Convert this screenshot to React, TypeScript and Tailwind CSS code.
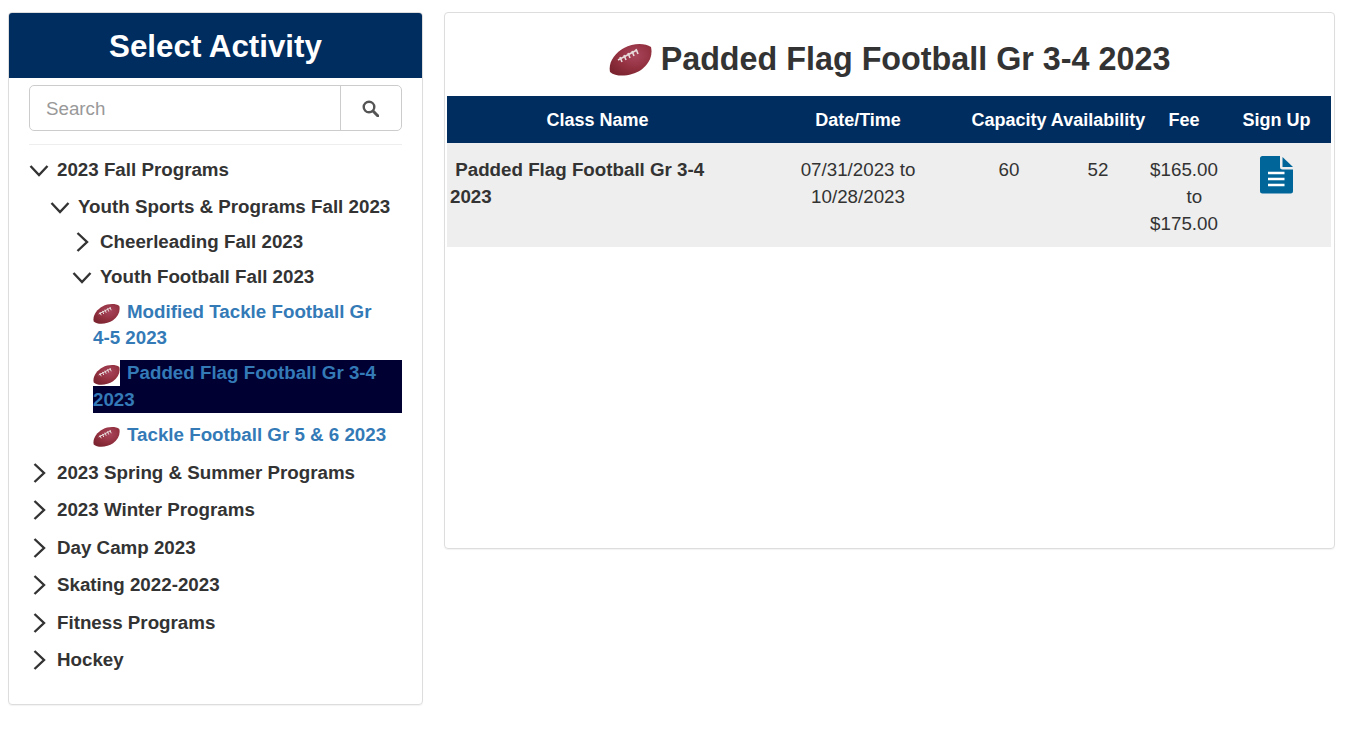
const Football = ({ w = 27, h = 20, id }: { w?: number; h?: number; id: string }) => (
  <svg width={w} height={h} viewBox="0 0 43 32" className="block">
    <defs>
      <radialGradient id={id} cx="60%" cy="35%" r="70%">
        <stop offset="0%" stopColor="#a8455c" />
        <stop offset="60%" stopColor="#93303f" />
        <stop offset="100%" stopColor="#7c2530" />
      </radialGradient>
    </defs>
    <path d="M1 28 C-1 18 6 9 15 4 C24 -1 36 -1 42 3 C44 12 40 20 32 26 C23 32 8 34 1 28 Z" fill={`url(#${id})`} />
    <path d="M9 16 L28 6" stroke="#e8dcdc" strokeWidth="1.6" />
    <path d="M11 13 L13 18 M15 11 L17 16 M19 9 L21 14 M23 7 L25 12 M27 5 L29 10" stroke="#e8dcdc" strokeWidth="1.6" />
  </svg>
);

// chevrons of the tree
const Arrow = ({ open }: { open: boolean }) => (
  <svg width="20" height="20" viewBox="0 0 20 20" fill="none" stroke="#333" strokeWidth="2.4" className="shrink-0 mt-[4px]">
    {open ? <path d="M1.5 6 L10 15 L18.5 6" /> : <path d="M5.5 1 L15 10 L5.5 19" />}
  </svg>
);

const SearchGlyph = () => (
  <svg width="17" height="17" viewBox="0 0 17 17" fill="none" stroke="#555" strokeWidth="2.4" className="relative -left-px">
    <circle cx="7" cy="7" r="5.3" />
    <path d="M11 11 L16 16" strokeWidth="3" strokeLinecap="round" />
  </svg>
);

const FileGlyph = () => (
  <svg width="33" height="38" viewBox="0 0 33 38" className="mx-auto">
    <path d="M2.5 0 H20 V11 Q20 13.5 22.5 13.5 H33 V35 Q33 37.5 30.5 37.5 H2.5 Q0 37.5 0 35 V2.5 Q0 0 2.5 0 Z" fill="#006699" />
    <path d="M22.5 1 L33 11 H22.5 Z" fill="#006699" />
    <path d="M8 17 H24.5 M8 23 H24.5 M8 29 H24.5" stroke="#fff" strokeWidth="2.4" />
  </svg>
);

const Branch = ({ label, open = false, gap = "mb-[10.5px]", children }: { label: string; open?: boolean; gap?: string; children?: React.ReactNode }) => (
  <li className={gap}>
    <div className="flex font-bold text-[#333]">
      <Arrow open={open} />
      <span className="ml-[8px]">{label}</span>
    </div>
    {children}
  </li>
);

const Leaf = ({ label, id, active = false }: { label: React.ReactNode; id: string; active?: boolean }) => (
  <li className={active ? "mb-[8.5px] bg-[#000033] leading-[26.5px]" : "mb-[8.5px] leading-[26.5px]"}>
    <a className="font-bold text-[#337ab7]">
      <span className="inline-block w-[27px] h-[26px] mr-[7px] align-top bg-white pt-[5px]">
        <Football id={id} />
      </span>
      {label}
    </a>
  </li>
);

const TH = ["Class Name", "Date/Time", "Capacity", "Availability", "Fee", "Sign Up"];
const WIDTHS = ["w-[301px]", "w-[220px]", "w-[82px]", "w-[96px]", "w-[76px]", "w-[109px]"];

export default function App() {
  return (
    <div className="flex items-start bg-white pt-[12px] pl-[8px] text-[18.75px] leading-[27px] text-[#333] font-['Liberation_Sans',Arial,sans-serif] min-h-[729px]">
      <div className="w-[415px] h-[693px] border border-[#ddd] rounded-[4px] shadow-[0_1px_1px_rgba(0,0,0,0.05)] overflow-hidden">
        <h2 className="h-[65px] bg-[#002d5f] text-white text-center text-[31.3px] leading-[67px] font-bold">Select Activity</h2>
        <div className="px-[20px] pt-[7px]">
          <div className="flex h-[46px] border border-[#ccc] rounded-[5px]">
            <input placeholder="Search" className="w-[311px] px-[16px] text-[18.75px] outline-none border-r border-[#ccc] placeholder:text-[#999]" />
            <div className="flex-1 flex items-center justify-center">
              <SearchGlyph />
            </div>
          </div>
          <hr className="mt-[13px] mb-[11px] border-[#eee]" />
          <ul>
            <Branch label="2023 Fall Programs" open>
              <ul className="pl-[21px] mt-[9.5px]">
                <Branch label="Youth Sports & Programs Fall 2023" open gap="mb-[10.5px]">
                  <ul className="pl-[22px] mt-[8px]">
                    <Branch label="Cheerleading Fall 2023" gap="mb-[8px]" />
                    <Branch label="Youth Football Fall 2023" open gap="mb-0">
                      <ul className="pl-[21px] mt-[9px]">
                        <Leaf
                          id="b1"
                          label={
                            <>
                              Modified Tackle Football Gr <span className="whitespace-nowrap">4-5</span> 2023
                            </>
                          }
                        />
                        <Leaf id="b2" label="Padded Flag Football Gr 3-4 2023" active />
                        <Leaf id="b3" label="Tackle Football Gr 5 & 6 2023" />
                      </ul>
                    </Branch>
                  </ul>
                </Branch>
              </ul>
            </Branch>
            <Branch label="2023 Spring & Summer Programs" />
            <Branch label="2023 Winter Programs" />
            <Branch label="Day Camp 2023" />
            <Branch label="Skating 2022-2023" />
            <Branch label="Fitness Programs" />
            <Branch label="Hockey" />
          </ul>
        </div>
      </div>

      <div className="ml-[21px] w-[891px] h-[537px] border border-[#ddd] rounded-[4px] shadow-[0_1px_1px_rgba(0,0,0,0.05)] px-[2px]">
        <h2 className="h-[83px] flex items-center justify-center text-[32.3px] font-bold text-[#333] pt-[10px]">
          <Football id="b4" w={43} h={32} />
          <span className="ml-[9px]">Padded Flag Football Gr 3-4 2023</span>
        </h2>
        <table className="w-[884px] table-fixed border-collapse">
          <thead>
            <tr className="h-[47px] bg-[#002d5f] text-white text-[18px]">
              {TH.map((t, i) => (
                <th key={t} className={`${WIDTHS[i]} pt-[1px] text-center font-bold whitespace-nowrap`}>
                  {t}
                </th>
              ))}
            </tr>
          </thead>
          <tbody>
            <tr className="h-[104px] bg-[#eee] align-top text-center">
              <td className="pt-[13px] px-[3px] text-left font-bold">{"\u00a0Padded Flag Football Gr 3-4 2023"}</td>
              <td className="pt-[13px]">
                07/31/2023 to
                <br />
                10/28/2023
              </td>
              <td className="pt-[13px]">60</td>
              <td className="pt-[13px]">52</td>
              <td className="pt-[13px]">
                $165.00
                <br />
                {"\u00a0\u00a0\u00a0\u00a0to"}
                <br />
                $175.00
              </td>
              <td className="pt-[13px]">
                <FileGlyph />
              </td>
            </tr>
          </tbody>
        </table>
      </div>
    </div>
  );
}
